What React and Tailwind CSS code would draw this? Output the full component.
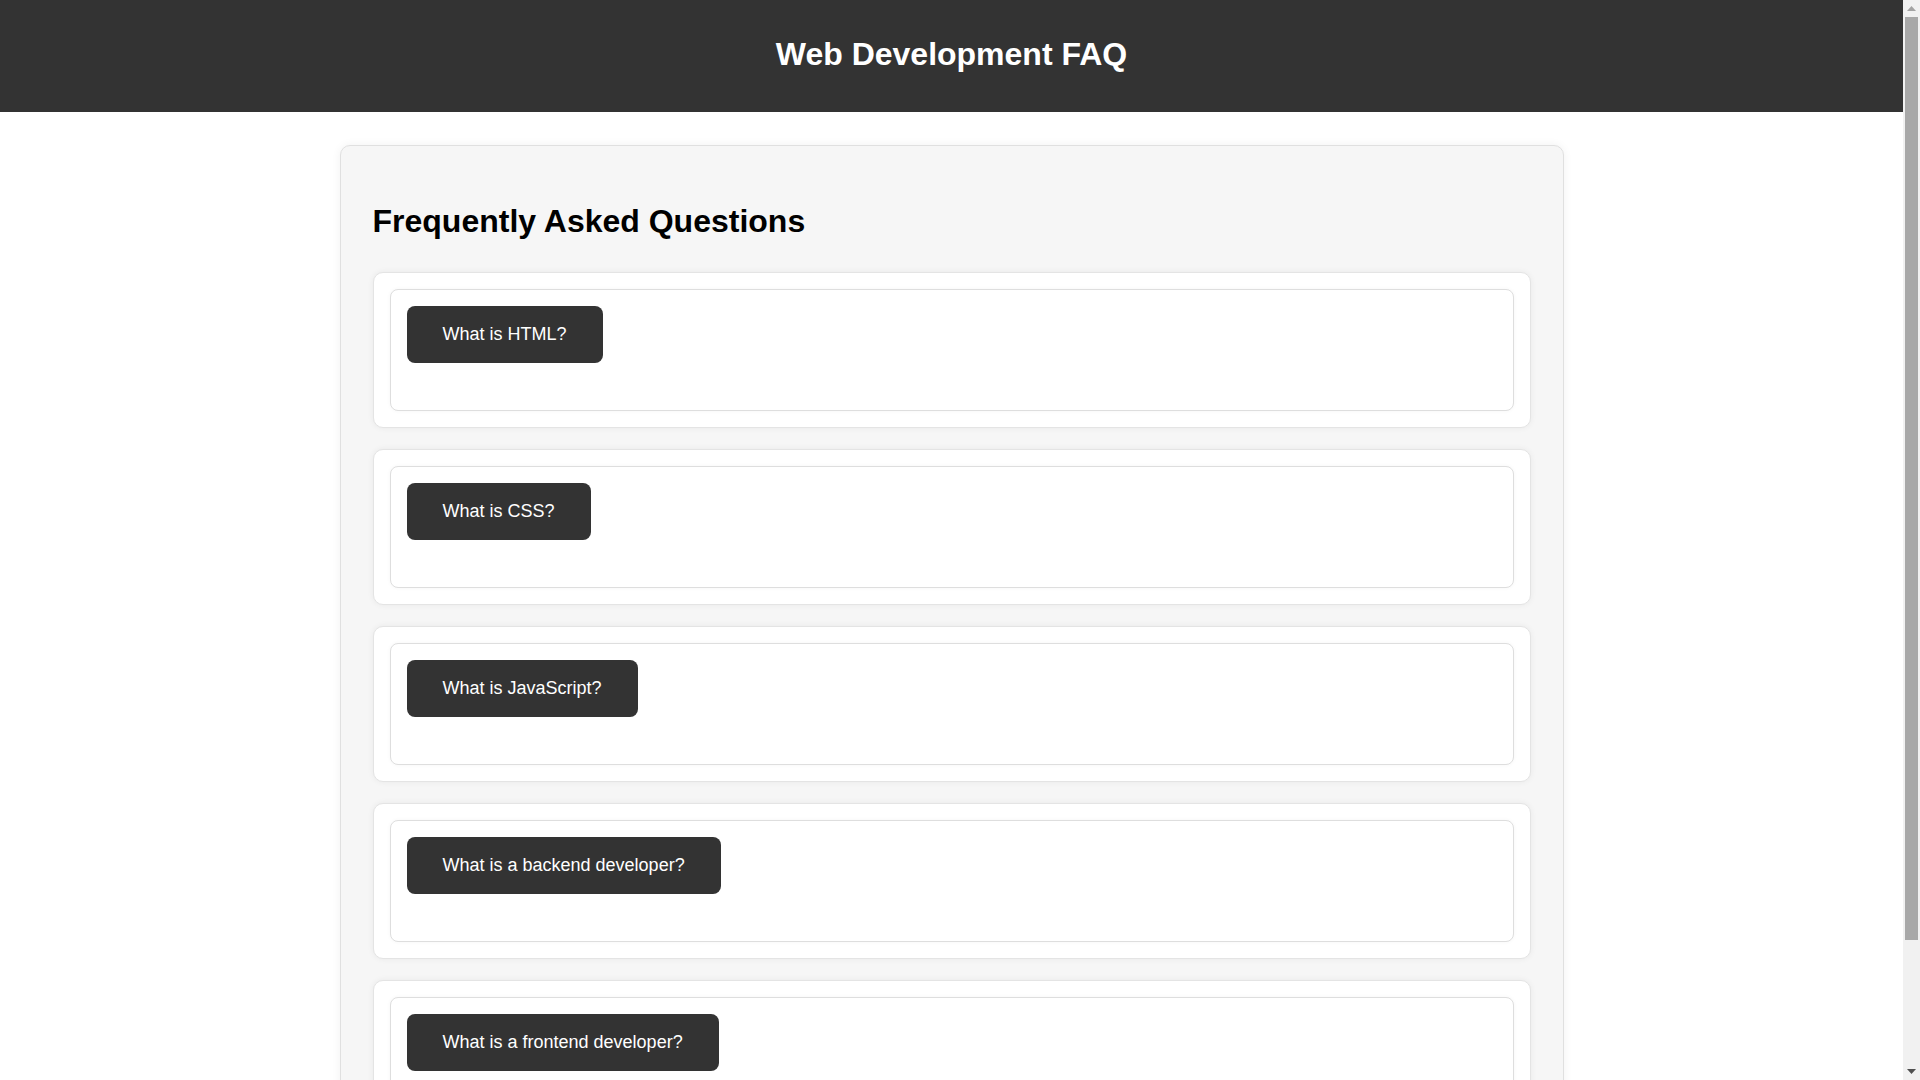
const faqs = [
  "What is HTML?",
  "What is CSS?",
  "What is JavaScript?",
  "What is a backend developer?",
  "What is a frontend developer?",
];

function FaqItem({ question }) {
  return (
    <div className="mb-[21px] rounded-[10px] border border-[#e4e4e4] bg-white p-4 shadow-[0_0_6px_rgba(0,0,0,0.06)]">
      <div className="rounded-lg border border-[#dedede] bg-white p-4 pb-[47px] shadow-[0_0_4px_rgba(0,0,0,0.04)]">
        <button className="rounded-lg bg-[#333333] px-9 py-[18px] text-[18px] leading-[21px] text-white">
          {question}
        </button>
      </div>
    </div>
  );
}

function ScrollBar() {
  return (
    <aside className="sticky top-0 flex h-screen w-[17px] shrink-0 flex-col bg-[#f1f1f1]">
      <div className="flex h-[17px] items-center justify-center">
        <svg width="9" height="5" viewBox="0 0 9 5">
          <path d="M4.5 0 L9 5 L0 5 Z" fill="#a3a3a3" />
        </svg>
      </div>
      <div className="flex-1 px-[2px]">
        <div className="h-[923px] bg-[#a8a8a8]" />
      </div>
      <div className="flex h-[17px] items-center justify-center">
        <svg width="9" height="5" viewBox="0 0 9 5">
          <path d="M0 0 L9 0 L4.5 5 Z" fill="#505050" />
        </svg>
      </div>
    </aside>
  );
}

export default function App() {
  return (
    <div className="flex bg-white font-['Liberation_Sans',Arial,sans-serif]">

      <main className="min-w-0 flex-1">

        {/* HEADER */}
        <header className="flex h-[112px] items-center justify-center bg-[#333333] pb-[3px]">
          <h1 className="text-[32px] font-bold leading-[37px] text-white">
            Web Development FAQ
          </h1>
        </header>

        {/* FAQ CONTAINER */}
        <div className="mx-auto mt-[33px] mb-[33px] w-[1224px] rounded-[10px] border border-[#e0e0e0] bg-[#f6f6f6] px-8 pt-8 pb-8 shadow-[0_0_10px_rgba(0,0,0,0.06)]">
          <h2 className="mt-[25px] mb-[32px] text-[32px] font-bold leading-[37px] text-black">
            Frequently Asked Questions
          </h2>

          {faqs.map((q, i) => (
            <FaqItem key={i} question={q} />
          ))}
        </div>

      </main>

      <ScrollBar />
    </div>
  );
}
